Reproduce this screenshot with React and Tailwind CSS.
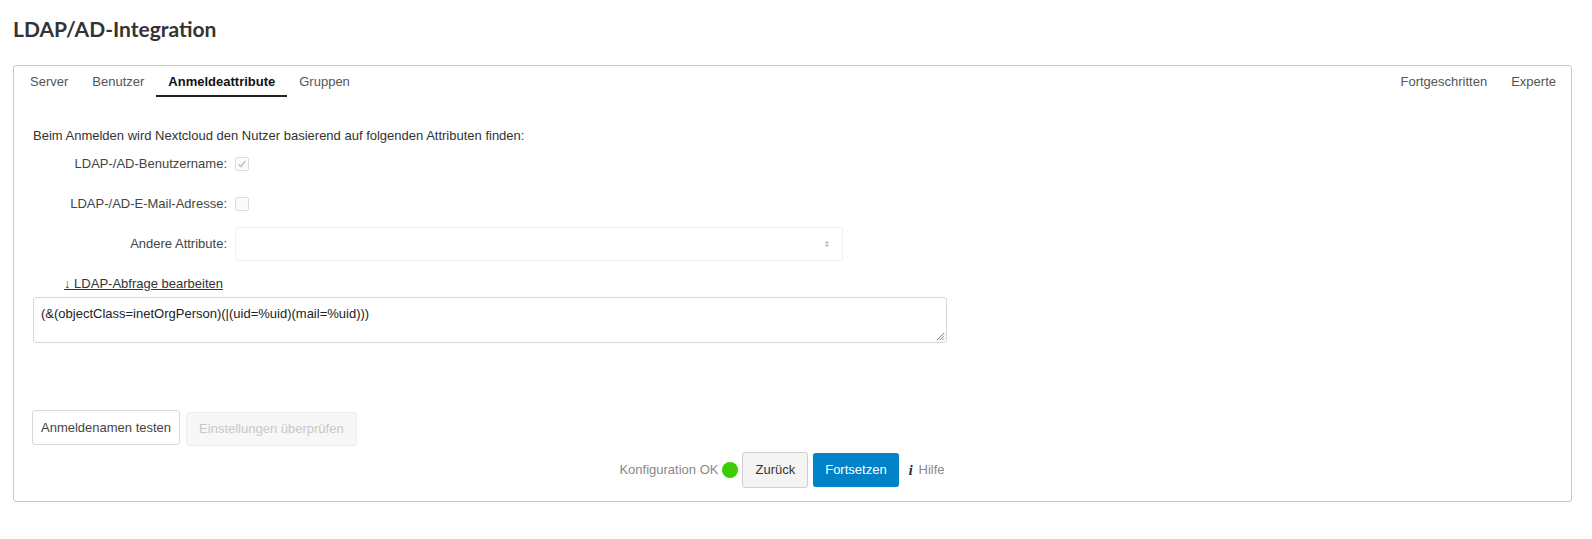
import { useState } from 'react'

const tabsLeft = ['Server', 'Benutzer', 'Anmeldeattribute', 'Gruppen']
const tabsRight = ['Fortgeschritten', 'Experte']

const Checkbox = ({ checked }) => (
  <span className="w-[14px] h-[14px] rounded-[2px] border border-[#dcdcdc] bg-[#fafafa] flex items-center justify-center">
    {checked && (
      <svg viewBox="0 0 12 12" className="w-[10px] h-[10px]">
        <path d="M2 6.5 L4.8 9 L10 2.5" fill="none" stroke="#c4c4c4" strokeWidth="2" />
      </svg>
    )}
  </span>
)

const App = () => {
  const [active] = useState('Anmeldeattribute')

  return (
    <div className="bg-white min-h-[539px] pl-[13px] pr-[20px] text-[13px] text-[#333]" style={{ fontFamily: '"Liberation Sans", Arial, sans-serif' }}>
      {/* Header */}
      <h2 className="pt-[13px] h-[65px] text-[21px] font-bold text-[#333]" style={{ fontFamily: 'Lato, "Noto Sans", sans-serif' }}>
        LDAP/AD-Integration
      </h2>

      {/* Panel */}
      <div className="border border-[#c8c8c8] rounded-[3px] h-[437px] flex flex-col">
        {/* Tabs */}
        <div className="flex justify-between pl-[4px] pr-[3px]">
          <div className="flex">
            {tabsLeft.map(t => (
              <div
                key={t}
                className={
                  t === active
                    ? 'px-[12px] pt-[6px] h-[31px] border-b-2 border-[#222] font-bold text-[#111]'
                    : 'px-[12px] pt-[6px] h-[31px] text-[#555]'
                }
              >
                {t}
              </div>
            ))}
          </div>
          <div className="flex">
            {tabsRight.map(t => (
              <div key={t} className="px-[12px] pt-[6px] h-[31px] text-[#555]">{t}</div>
            ))}
          </div>
        </div>

        {/* Content */}
        <div className="px-[19px] pt-[31px] flex flex-col flex-1">
          <p className="leading-[16px]">Beim Anmelden wird Nextcloud den Nutzer basierend auf folgenden Attributen finden:</p>

          <div className="flex items-center gap-[8px] mt-[11px] h-[18px]">
            <span className="w-[194px] text-right text-[#444]">LDAP-/AD-Benutzername:</span>
            <Checkbox checked />
          </div>

          <div className="flex items-center gap-[8px] mt-[22px] h-[18px]">
            <span className="w-[194px] text-right text-[#444]">LDAP-/AD-E-Mail-Adresse:</span>
            <Checkbox />
          </div>

          <div className="flex items-center gap-[8px] mt-[14px]">
            <span className="w-[194px] text-right text-[#444]">Andere Attribute:</span>
            <div className="w-[608px] h-[34px] border border-[#efefef] rounded-[3px] flex items-center justify-end pr-[12px]">
              <svg viewBox="0 0 8 10" className="w-[6px] h-[8px]">
                <path d="M1 4 L4 1 L7 4 Z M1 6 L4 9 L7 6 Z" fill="#b0b0b0" />
              </svg>
            </div>
          </div>

          <div className="mt-[15px] ml-[31px] h-[16px] flex items-center">
            <a href="#" className="underline text-[#333] leading-[16px]">↓ LDAP-Abfrage bearbeiten</a>
          </div>

          <div className="relative mt-[5px] w-[914px] h-[46px] border border-[#d6d6d6] rounded-[3px] px-[7px] pt-[6px] text-[#222]">
            (&amp;(objectClass=inetOrgPerson)(|(uid=%uid)(mail=%uid)))
            <svg viewBox="0 0 10 10" className="absolute right-[1px] bottom-[1px] w-[9px] h-[9px]">
              <path d="M9 1 L1 9 M9 4 L4 9 M9 7 L7 9" stroke="#777" strokeWidth="1" />
            </svg>
          </div>

          {/* Test buttons */}
          <div className="flex items-start gap-[6px] mt-[67px] -ml-[1px]">
            <button className="h-[35px] px-[8px] border border-[#d8d8d8] rounded-[3px] bg-white text-[#444]">
              Anmeldenamen testen
            </button>
            <button disabled className="h-[34px] mt-[2px] px-[12px] border border-[#ececec] rounded-[3px] bg-[#f7f7f7] text-[#c8c8c8]">
              Einstellungen überprüfen
            </button>
          </div>

          {/* Wizard controls */}
          <div className="flex items-center justify-center gap-[4px] mt-[6px] pr-[21px]">
            <span className="text-[#888]">Konfiguration OK</span>
            <span className="w-[16px] h-[16px] rounded-full bg-[#3ccd00]" />
            <button className="h-[36px] px-[12px] border border-[#cfcfcf] rounded-[3px] bg-[#f4f4f4] text-[#333]">Zurück</button>
            <button className="h-[34px] px-[12px] ml-[1px] rounded-[3px] bg-[#0082c9] text-white">Fortsetzen</button>
            <span className="ml-[6px] font-bold italic text-[14px] text-[#222]" style={{ fontFamily: '"Liberation Serif", serif' }}>i</span>
            <span className="ml-[2px] text-[#888]">Hilfe</span>
          </div>
        </div>
      </div>
    </div>
  )
}

export default App
